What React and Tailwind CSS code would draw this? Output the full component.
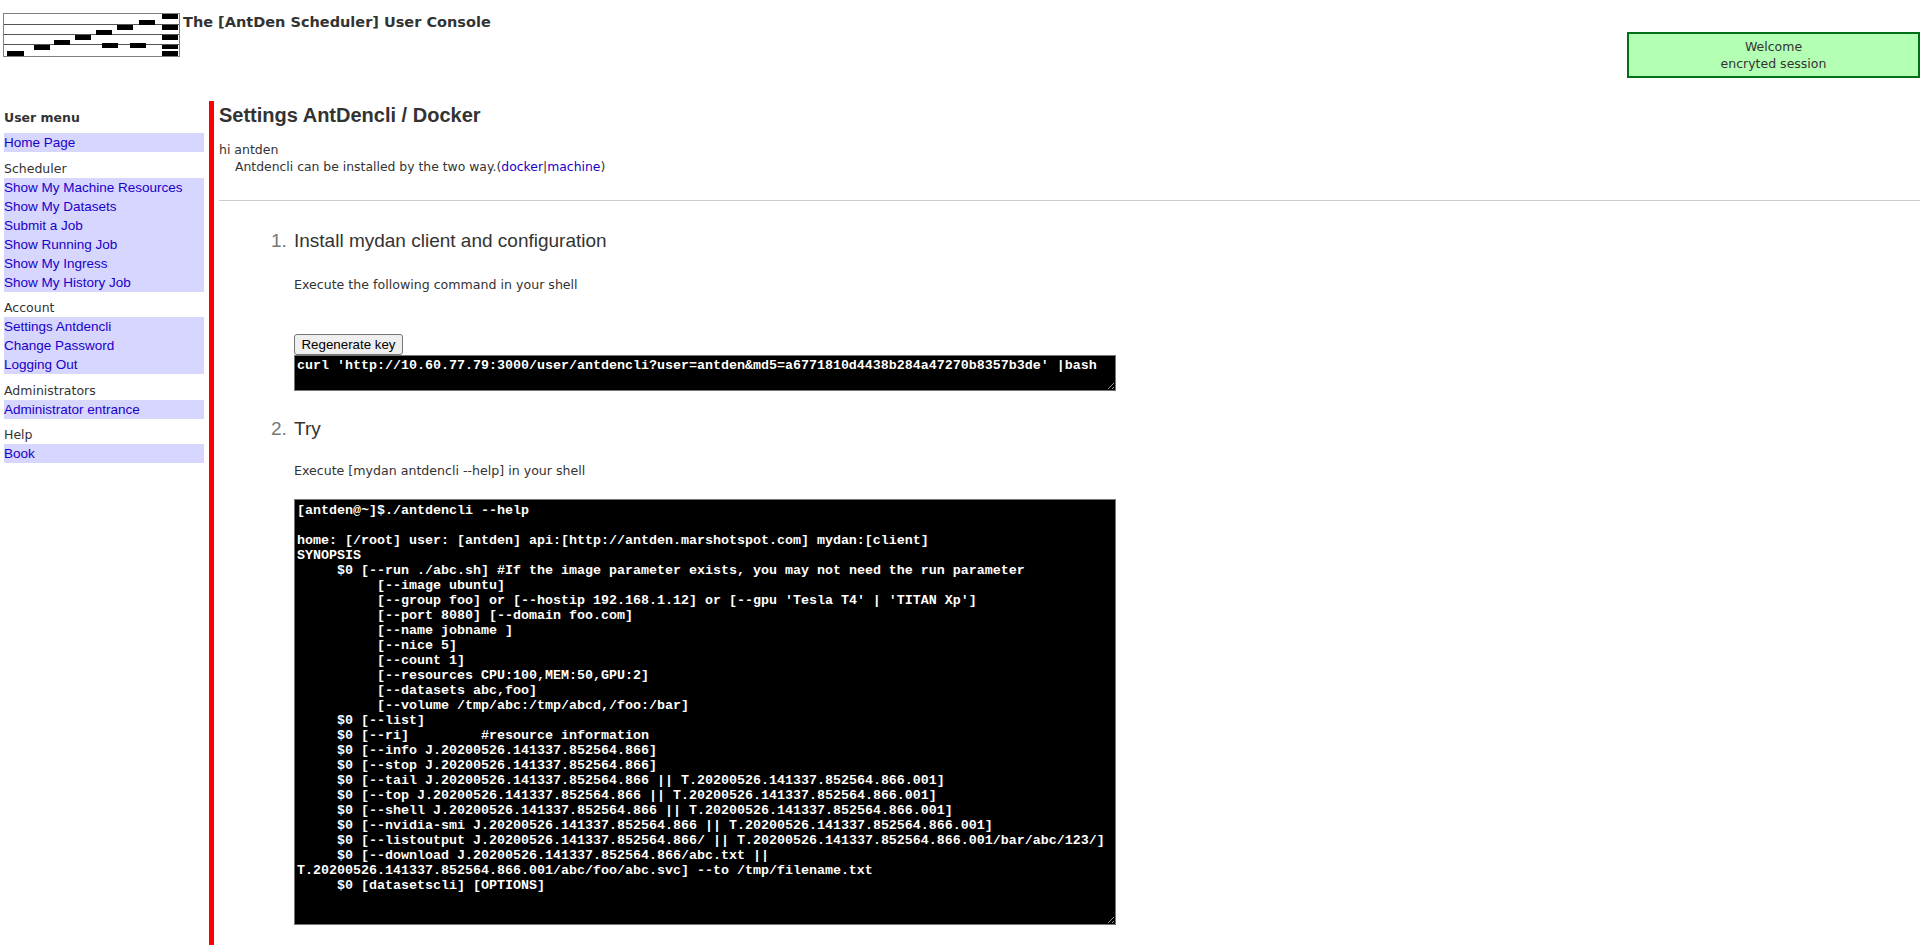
import React from 'react';

const lucida = 'font-["DejaVu_Sans",sans-serif]';

const menu = [
  { title: null, links: ['Home Page'] },
  {
    title: 'Scheduler',
    links: [
      'Show My Machine Resources',
      'Show My Datasets',
      'Submit a Job',
      'Show Running Job',
      'Show My Ingress',
      'Show My History Job',
    ],
  },
  { title: 'Account', links: ['Settings Antdencli', 'Change Password', 'Logging Out'] },
  { title: 'Administrators', links: ['Administrator entrance'] },
  { title: 'Help', links: ['Book'] },
];

const curlCommand =
  "curl 'http://10.60.77.79:3000/user/antdencli?user=antden&md5=a6771810d4438b284a47270b8357b3de' |bash";

const helpText = `[antden@~]$./antdencli --help

home: [/root] user: [antden] api:[http://antden.marshotspot.com] mydan:[client]
SYNOPSIS
     $0 [--run ./abc.sh] #If the image parameter exists, you may not need the run parameter
          [--image ubuntu]
          [--group foo] or [--hostip 192.168.1.12] or [--gpu 'Tesla T4' | 'TITAN Xp']
          [--port 8080] [--domain foo.com]
          [--name jobname ]
          [--nice 5]
          [--count 1]
          [--resources CPU:100,MEM:50,GPU:2]
          [--datasets abc,foo]
          [--volume /tmp/abc:/tmp/abcd,/foo:/bar]
     $0 [--list]
     $0 [--ri]         #resource information
     $0 [--info J.20200526.141337.852564.866]
     $0 [--stop J.20200526.141337.852564.866]
     $0 [--tail J.20200526.141337.852564.866 || T.20200526.141337.852564.866.001]
     $0 [--top J.20200526.141337.852564.866 || T.20200526.141337.852564.866.001]
     $0 [--shell J.20200526.141337.852564.866 || T.20200526.141337.852564.866.001]
     $0 [--nvidia-smi J.20200526.141337.852564.866 || T.20200526.141337.852564.866.001]
     $0 [--listoutput J.20200526.141337.852564.866/ || T.20200526.141337.852564.866.001/bar/abc/123/]
     $0 [--download J.20200526.141337.852564.866/abc.txt || T.20200526.141337.852564.866.001/abc/foo/abc.svc] --to /tmp/filename.txt
     $0 [datasetscli] [OPTIONS]`;

function Logo() {
  const bars = [
    [162, 14, 16, 5], [162, 25, 16, 5], [162, 35, 16, 5], [162, 45, 16, 4], [162, 51, 16, 5],
    [7, 51, 17, 5], [34, 45, 16, 5], [54, 40, 16, 5], [75, 35, 16, 5], [96, 30, 16, 5],
    [117, 25, 16, 5], [139, 20, 16, 5], [102, 43, 16, 5], [130, 43, 16, 5],
  ];
  return (
    <svg width="178" height="44" viewBox="3 13 178 44" className="ml-[3px] mt-[13px] shrink-0">
      <rect x="3.5" y="13.5" width="176" height="43" fill="#fff" stroke="#808080" />
      <path d="M4 24.5H179M4 34.5H179M4 44.5H179" stroke="#555" />
      {bars.map(([x, y, w, h], i) => (
        <rect key={i} x={x} y={y} width={w} height={h} fill="#000" />
      ))}
    </svg>
  );
}

function App() {
  return (
    <div className={`min-h-screen bg-white text-[#333] ${lucida}`}>
      <header className="flex h-[101px]">
        <Logo />
        <h1 className="ml-[2px] mt-[13px] text-[14.5px] font-bold leading-[18px] text-[#333]">
          The [AntDen Scheduler] User Console
        </h1>
        <div className="ml-auto mt-[32px] h-[46px] w-[293px] border-2 border-[#007016] bg-[#b3ffb3] pt-[4px] text-center text-[12.5px] leading-[17px]">
          Welcome
          <br />
          encryted session
        </div>
      </header>

      <div className="flex">
        <aside className="w-[209px] shrink-0 pl-[4px] pr-[5px] pt-[8px]">
          <div className="mb-[7px] text-[12.5px] font-bold leading-[17px]">User menu</div>
          {menu.map((group, i) => (
            <div key={i} className="mb-[6.5px]">
              {group.title && <div className="text-[12.5px] leading-[19px]">{group.title}</div>}
              <ul className='bg-[#d6d6ff] font-["Liberation_Sans",sans-serif] text-[13.5px] leading-[19px] text-[#1a00c8]'>
                {group.links.map((link) => (
                  <li key={link}>
                    <a href="#">{link}</a>
                  </li>
                ))}
              </ul>
            </div>
          ))}
        </aside>

        <main className="min-h-[844px] min-w-0 flex-1 border-l-[5px] border-[#ff0000] pl-[5px]">
          <h2 className='mt-[2px] font-["Liberation_Sans",sans-serif] text-[20px] font-bold leading-[24px]'>
            Settings AntDencli / Docker
          </h2>
          <div className="mt-[14px] text-[12.5px] leading-[17px]">
            <div>hi antden</div>
            <div className="pl-[16px] text-[12.4px]">
              Antdencli can be installed by the two way.(
              <a href="#" className="text-[#1a00c8]">docker</a>|<a href="#" className="text-[#1a00c8]">machine</a>)
            </div>
          </div>
          <hr className="mt-[25px] border-0 border-t border-[#ccc]" />

          <ol className='ml-[75px] font-["Liberation_Sans",sans-serif]'>
            <li className="relative w-[822px]">
              <span className="absolute -left-[23px] top-[29px] text-[19px] leading-[22px] text-[#777]">1.</span>
              <h3 className="pt-[29px] text-[19px] leading-[22px]">Install mydan client and configuration</h3>
              <p className={`mt-[24px] text-[12.6px] leading-[17px] ${lucida}`}>Execute the following command in your shell</p>
              <button className="mt-[41px] block h-[21px] w-[109px] rounded-[3px] border border-[#767676] bg-[#efefef] text-[13.33px] leading-[19px] text-black">
                Regenerate key
              </button>
              <textarea
                readOnly
                defaultValue={curlCommand}
                className='block h-[36px] w-[822px] border border-[#767676] bg-black p-[2px] font-["Liberation_Mono",monospace] text-[13.33px] font-bold leading-[15px] text-white'
              />
            </li>
            <li className="relative w-[822px]">
              <span className="absolute -left-[23px] top-[27px] text-[19px] leading-[22px] text-[#777]">2.</span>
              <h3 className="pt-[27px] text-[19px] leading-[22px]">Try</h3>
              <p className={`mt-[22px] text-[12.6px] leading-[17px] ${lucida}`}>Execute [mydan antdencli --help] in your shell</p>
              <textarea
                readOnly
                defaultValue={helpText}
                className='mt-[20px] block h-[426px] w-[822px] border border-[#767676] bg-black px-[2px] pb-[2px] pt-[3px] font-["Liberation_Mono",monospace] text-[13.33px] font-bold leading-[15px] text-white'
              />
            </li>
          </ol>
        </main>
      </div>
    </div>
  );
}

export default App;
